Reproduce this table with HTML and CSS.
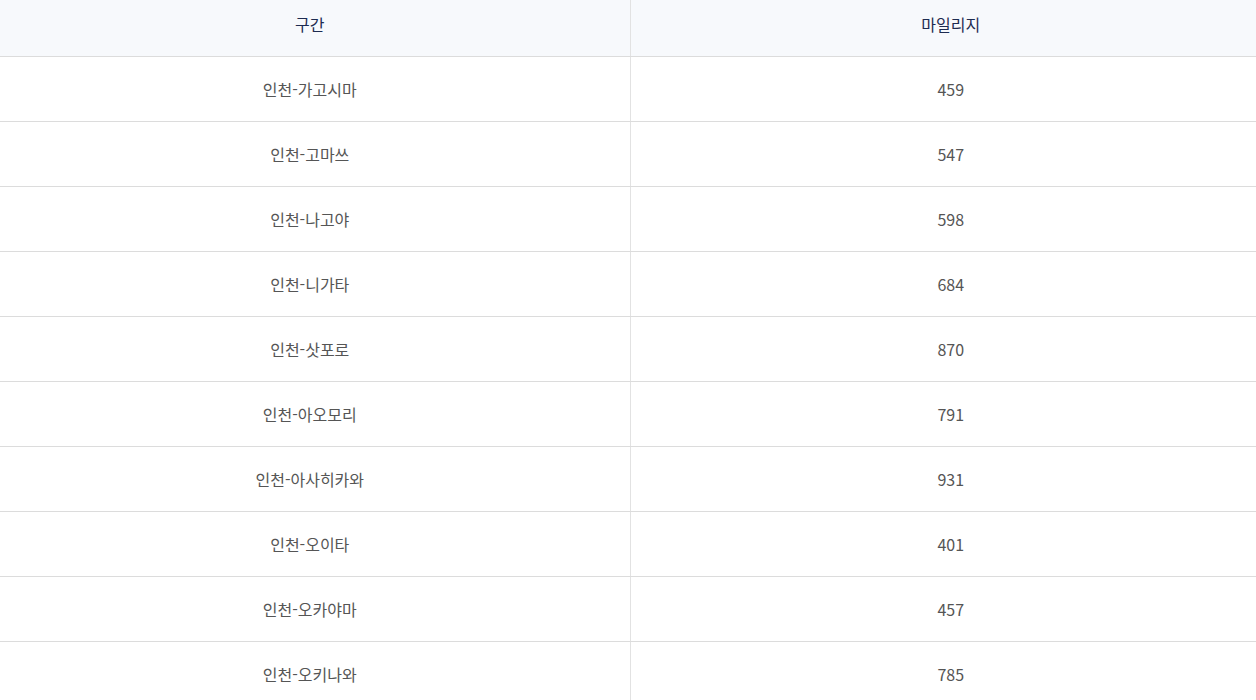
FILE: index.html
```html
<!DOCTYPE html>
<html lang="ko">
<head>
<meta charset="utf-8">
<link rel="stylesheet" href="styles.css">
</head>
<body>
<table class="miles">
  <colgroup><col class="c1"><col class="c2"></colgroup>
  <thead>
    <tr><th class="route">구간</th><th class="mile">마일리지</th></tr>
  </thead>
  <tbody>
    <tr><td class="route">인천-가고시마</td><td class="mile">459</td></tr>
    <tr><td class="route">인천-고마쓰</td><td class="mile">547</td></tr>
    <tr><td class="route">인천-나고야</td><td class="mile">598</td></tr>
    <tr><td class="route">인천-니가타</td><td class="mile">684</td></tr>
    <tr><td class="route">인천-삿포로</td><td class="mile">870</td></tr>
    <tr><td class="route">인천-아오모리</td><td class="mile">791</td></tr>
    <tr><td class="route">인천-아사히카와</td><td class="mile">931</td></tr>
    <tr><td class="route">인천-오이타</td><td class="mile">401</td></tr>
    <tr><td class="route">인천-오카야마</td><td class="mile">457</td></tr>
    <tr><td class="route">인천-오키나와</td><td class="mile">785</td></tr>
  </tbody>
</table>
</body>
</html>
```
FILE: styles.css
```css
html, body {
  margin: 0;
  padding: 0;
  background: #fff;
}
body {
  font-family: "Noto Sans CJK KR", "Noto Sans", sans-serif;
  font-size: 16px;
}
.miles {
  width: 100%;
  border-collapse: collapse;
  table-layout: fixed;
}
.c1 { width: 630px; }
.miles th {
  height: 56px;
  padding-top: 0;
  padding-bottom: 8px;
  box-sizing: border-box;
  background: #f7f9fc;
  color: #1d2b50;
  font-weight: 400;
  border-bottom: 1px solid #dcdcdc;
  border-right: 1px solid #e2e2e2;
}
.miles td {
  height: 64px;
  padding-top: 0;
  padding-bottom: 0;
  text-align: center;
  color: #555;
  border-bottom: 1px solid #dcdcdc;
  border-right: 1px solid #e2e2e2;
}
.miles .route { padding-left: 0; padding-right: 10px; }
.miles .mile { padding-left: 15px; padding-right: 0; border-right: none; }
```
